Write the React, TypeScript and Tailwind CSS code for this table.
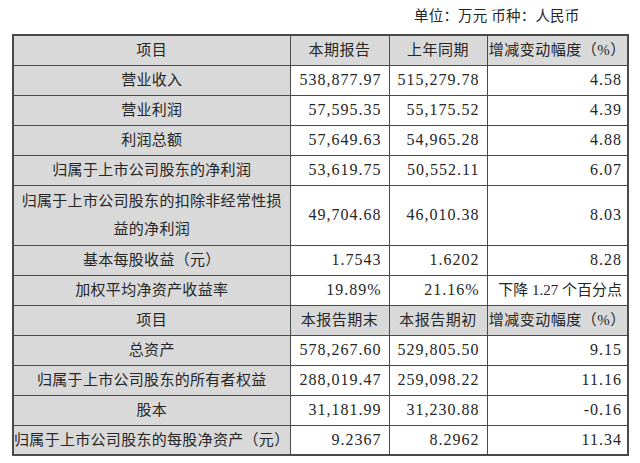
const font = {
  fontFamily: '"Liberation Serif", "Noto Sans CJK SC", serif',
};

type Row = { label: string[]; a: string; b: string; c: string; tall?: boolean; cjk?: boolean };

const first: Row[] = [
  { label: ["营业收入"], a: "538,877.97", b: "515,279.78", c: "4.58" },
  { label: ["营业利润"], a: "57,595.35", b: "55,175.52", c: "4.39" },
  { label: ["利润总额"], a: "57,649.63", b: "54,965.28", c: "4.88" },
  { label: ["归属于上市公司股东的净利润"], a: "53,619.75", b: "50,552.11", c: "6.07" },
  {
    label: ["归属于上市公司股东的扣除非经常性损", "益的净利润"],
    a: "49,704.68",
    b: "46,010.38",
    c: "8.03",
    tall: true,
  },
  { label: ["基本每股收益（元）"], a: "1.7543", b: "1.6202", c: "8.28" },
  { label: ["加权平均净资产收益率"], a: "19.89%", b: "21.16%", c: "下降 1.27 个百分点", cjk: true },
];

const second: Row[] = [
  { label: ["总资产"], a: "578,267.60", b: "529,805.50", c: "9.15" },
  { label: ["归属于上市公司股东的所有者权益"], a: "288,019.47", b: "259,098.22", c: "11.16" },
  { label: ["股本"], a: "31,181.99", b: "31,230.88", c: "-0.16" },
  { label: ["归属于上市公司股东的每股净资产（元）"], a: "9.2367", b: "8.2962", c: "11.34" },
];

const cell = "border border-[#4a4a4a] p-0 align-middle";

function Head({ cols }: { cols: string[] }) {
  return (
    <tr className="h-[30px] bg-[#d9d9d9]">
      {cols.map((c) => (
        <td key={c} className={`${cell} text-center text-[15px] leading-[22px] tracking-[0.5px] whitespace-nowrap`}>
          {c}
        </td>
      ))}
    </tr>
  );
}

function Body({ rows }: { rows: Row[] }) {
  return (
    <>
      {rows.map((r) => (
        <tr key={r.a} className={r.tall ? "h-[60px]" : "h-[30px]"}>
          <td className={`${cell} bg-[#d9d9d9] text-center text-[15px] leading-[28px] tracking-[0.3px] whitespace-nowrap`}>
            {r.label.map((l) => (
              <div key={l}>{l}</div>
            ))}
          </td>
          <td className={`${cell} text-right pr-[7px] text-[16px] leading-[22px] tracking-[1px] whitespace-nowrap`}>{r.a}</td>
          <td className={`${cell} text-right pr-[7px] text-[16px] leading-[22px] tracking-[1px] whitespace-nowrap`}>{r.b}</td>
          <td
            className={`${cell} text-right pr-[5px] leading-[22px] whitespace-nowrap ${
              r.cjk ? "text-[15px] tracking-[0px]" : "text-[16px] tracking-[1px]"
            }`}
          >
            {r.c}
          </td>
        </tr>
      ))}
    </>
  );
}

export default function App() {
  return (
    <div className="w-[640px] h-[463px] bg-white text-[#262626] overflow-hidden" style={font}>
      <div className="h-[34px] flex items-center pl-[414px] text-[14.5px] tracking-[0.2px]">
        单位：万元 币种：人民币
      </div>
      <table className="ml-[12px] w-[615px] table-fixed border-collapse border-2 border-[#4a4a4a]">
        <colgroup>
          <col className="w-[277px]" />
          <col className="w-[99px]" />
          <col className="w-[98px]" />
          <col className="w-[141px]" />
        </colgroup>
        <tbody>
          <Head cols={["项目", "本期报告", "上年同期", "增减变动幅度（%）"]} />
          <Body rows={first} />
          <Head cols={["项目", "本报告期末", "本报告期初", "增减变动幅度（%）"]} />
          <Body rows={second} />
        </tbody>
      </table>
    </div>
  );
}
